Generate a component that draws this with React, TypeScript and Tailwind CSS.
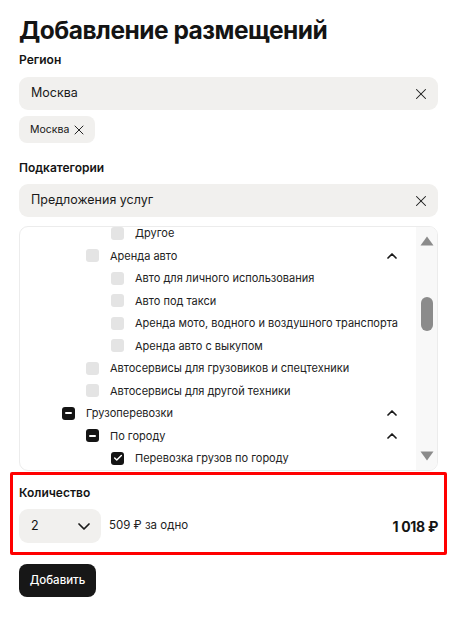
import { Check, X } from 'lucide-react';

type State = 'none' | 'checked' | 'partial';

const rows: { label: string; level: 1 | 2 | 3; state: State; open?: boolean }[] = [
	{ label: 'Другое', level: 3, state: 'none' },
	{ label: 'Аренда авто', level: 2, state: 'none', open: true },
	{ label: 'Авто для личного использования', level: 3, state: 'none' },
	{ label: 'Авто под такси', level: 3, state: 'none' },
	{ label: 'Аренда мото, водного и воздушного транспорта', level: 3, state: 'none' },
	{ label: 'Аренда авто с выкупом', level: 3, state: 'none' },
	{ label: 'Автосервисы для грузовиков и спецтехники', level: 2, state: 'none' },
	{ label: 'Автосервисы для другой техники', level: 2, state: 'none' },
	{ label: 'Грузоперевозки', level: 1, state: 'partial', open: true },
	{ label: 'По городу', level: 2, state: 'partial', open: true },
	{ label: 'Перевозка грузов по городу', level: 3, state: 'checked' },
];

const indent = {
	1: 'pl-[42px]',
	2: 'pl-[66px]',
	3: 'pl-[91px]',
};

const Box = ({ state }: { state: State }) => {
	if (state === 'none') {
		return <span className="h-[13px] w-[13px] shrink-0 rounded-[3px] bg-[#e4e4e4]" />;
	}
	return (
		<span className="flex h-[13px] w-[13px] shrink-0 items-center justify-center rounded-[3px] bg-[#141414]">
			{state === 'checked' ? (
				<Check size={10} strokeWidth={3.5} color="#fff" />
			) : (
				<span className="h-[2px] w-[7px] rounded-full bg-white" />
			)}
		</span>
	);
};

const Chevron = ({ up, w = 10 }: { up?: boolean; w?: number }) => (
	<svg width={w} height={w / 2 + 1} viewBox={`0 0 ${w} ${w / 2 + 1}`} fill="none">
		<path
			d={
				up
					? `M1 ${w / 2} L${w / 2} 1 L${w - 1} ${w / 2}`
					: `M1 1 L${w / 2} ${w / 2} L${w - 1} 1`
			}
			stroke="#1a1a1a"
			strokeWidth="1.7"
			strokeLinecap="round"
			strokeLinejoin="round"
		/>
	</svg>
);

const Field = ({ value }: { value: string }) => (
	<div className="flex h-[33px] items-center justify-between rounded-[9px] bg-[#f1f0ee] pl-3 pr-[8px] text-[12.5px] text-[#1a1a1a]">
		<span>{value}</span>
		<X size={18} strokeWidth={1.4} color="#1a1a1a" />
	</div>
);

const App = () => {
	return (
		<div
			className="min-h-[622px] w-[452px] bg-white pl-[19px] pt-[14px] text-[#141414]"
			style={{ fontFamily: 'Inter, "Noto Sans", sans-serif' }}
		>
			<div className="w-[419px]">
				<h1 className="text-[24.5px] font-bold leading-[32px] tracking-[-0.5px]">
					Добавление размещений
				</h1>

				<p className="mt-[6px] text-[12px] font-semibold leading-[16px]">Регион</p>
				<div className="mt-[9px]">
					<Field value="Москва" />
				</div>
				<div className="mt-[6px] flex h-[27px] w-fit items-center gap-[2px] rounded-[8px] bg-[#f1f0ee] pl-[11px] pr-[8px] text-[10.5px]">
					<span>Москва</span>
					<X size={16} strokeWidth={1.4} />
				</div>

				<p className="mt-[17px] text-[12px] font-semibold leading-[16px]">Подкатегории</p>
				<div className="mt-[8px]">
					<Field value="Предложения услуг" />
				</div>

				<div className="mt-[9px] flex h-[245px] overflow-hidden rounded-[9px] border border-[#ececec]">
					<div className="flex-1 overflow-hidden">
						<div className="-mt-[5px]">
							{rows.map((r) => (
								<div
									key={r.label}
									className={`flex h-[22.5px] items-center gap-[11px] pr-[19px] text-[11px] text-[#222] ${indent[r.level]}`}
								>
									<Box state={r.state} />
									<span className="flex-1 whitespace-nowrap">{r.label}</span>
									{r.open && <Chevron up />}
								</div>
							))}
						</div>
					</div>
					<div className="flex w-[21px] flex-col items-center bg-[#f8f8f8] pt-[9px] pb-[9px]">
						<svg width="14" height="10" viewBox="0 0 14 10">
							<path d="M7 0.5 L13.5 9.5 H0.5 Z" fill="#8b8b8b" />
						</svg>
						<div className="mt-[51px] h-[34px] w-[12px] rounded-full bg-[#8b8b8b]" />
						<div className="flex-1" />
						<svg width="14" height="10" viewBox="0 0 14 10">
							<path d="M0.5 0.5 H13.5 L7 9.5 Z" fill="#8b8b8b" />
						</svg>
					</div>
				</div>

				<div className="-ml-[9px] mt-[1px] w-[437px] rounded-[2px] border-[3px] border-[#ff0000] pb-[9px] pl-[6px] pr-[6px] pt-[10px]">
					<p className="text-[12px] font-semibold leading-[16px]">Количество</p>
					<div className="mt-[8px] flex items-center">
						<div className="flex h-[34px] w-[82px] items-center justify-between rounded-[9px] bg-[#f1f0ee] pl-3 pr-[11px] text-[12.5px]">
							<span>2</span>
							<Chevron w={12} />
						</div>
						<span className="ml-[8px] text-[11.5px] text-[#222]">509 ₽ за одно</span>
						<span className="ml-auto text-[14px] font-bold tracking-[-0.3px]">1 018 ₽</span>
					</div>
				</div>

				<button className="mt-[9px] flex h-[33px] w-[77px] items-center justify-center rounded-[8px] bg-[#171717] text-[11.5px] font-medium text-white">
					Добавить
				</button>
			</div>
		</div>
	);
};

export default App;
